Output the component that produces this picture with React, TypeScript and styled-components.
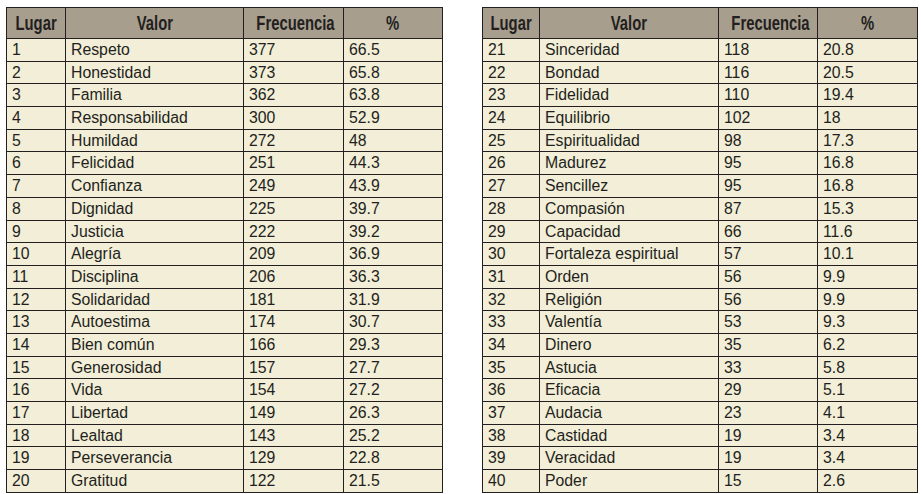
import React from "react";
import styled, { createGlobalStyle } from "styled-components";

const Global = createGlobalStyle`
  html, body { margin: 0; padding: 0; background: #ffffff; }
  body { font-family: "Liberation Sans", Arial, sans-serif; }
`;

type Row = [number, string, number, string];

const left: Row[] = [
  [1, "Respeto", 377, "66.5"],
  [2, "Honestidad", 373, "65.8"],
  [3, "Familia", 362, "63.8"],
  [4, "Responsabilidad", 300, "52.9"],
  [5, "Humildad", 272, "48"],
  [6, "Felicidad", 251, "44.3"],
  [7, "Confianza", 249, "43.9"],
  [8, "Dignidad", 225, "39.7"],
  [9, "Justicia", 222, "39.2"],
  [10, "Alegría", 209, "36.9"],
  [11, "Disciplina", 206, "36.3"],
  [12, "Solidaridad", 181, "31.9"],
  [13, "Autoestima", 174, "30.7"],
  [14, "Bien común", 166, "29.3"],
  [15, "Generosidad", 157, "27.7"],
  [16, "Vida", 154, "27.2"],
  [17, "Libertad", 149, "26.3"],
  [18, "Lealtad", 143, "25.2"],
  [19, "Perseverancia", 129, "22.8"],
  [20, "Gratitud", 122, "21.5"],
];

const right: Row[] = [
  [21, "Sinceridad", 118, "20.8"],
  [22, "Bondad", 116, "20.5"],
  [23, "Fidelidad", 110, "19.4"],
  [24, "Equilibrio", 102, "18"],
  [25, "Espiritualidad", 98, "17.3"],
  [26, "Madurez", 95, "16.8"],
  [27, "Sencillez", 95, "16.8"],
  [28, "Compasión", 87, "15.3"],
  [29, "Capacidad", 66, "11.6"],
  [30, "Fortaleza espiritual", 57, "10.1"],
  [31, "Orden", 56, "9.9"],
  [32, "Religión", 56, "9.9"],
  [33, "Valentía", 53, "9.3"],
  [34, "Dinero", 35, "6.2"],
  [35, "Astucia", 33, "5.8"],
  [36, "Eficacia", 29, "5.1"],
  [37, "Audacia", 23, "4.1"],
  [38, "Castidad", 19, "3.4"],
  [39, "Veracidad", 19, "3.4"],
  [40, "Poder", 15, "2.6"],
];

const Page = styled.div`
  display: flex;
  gap: 39px;
  padding: 7px 0 0 6px;
  align-items: flex-start;
`;

const Table = styled.table<{ $w: number }>`
  width: ${(p) => p.$w}px;
  border-collapse: collapse;
  table-layout: fixed;
  background: #f2eed7;
  border: 1.5px solid #231f20;
  color: #231f20;
`;

const HeadCell = styled.th`
  background: #a79e8e;
  border: 1px solid #231f20;
  height: 24px;
  padding: 6px 0 0 0;
  text-align: center;
  vertical-align: top;
  font-family: "Liberation Sans", Arial, sans-serif;
  font-weight: 700;
  font-size: 19.5px;
  line-height: 1;
  color: #231f20;
  overflow: hidden;
`;

const Squeeze = styled.span`
  display: inline-block;
  transform: scaleX(0.76);
  transform-origin: center;
  white-space: nowrap;
`;

const Cell = styled.td`
  border: 1px solid #231f20;
  height: 18.7px;
  padding: 3px 5px 0 5px;
  vertical-align: top;
  font-size: 15.8px;
  line-height: 1;
  white-space: nowrap;
  overflow: hidden;
`;

const widths = {
  left: [59, 178, 100, 99],
  right: [57, 179, 99, 100],
};

const DataTable: React.FC<{ rows: Row[]; cols: number[] }> = ({ rows, cols }) => (
  <Table $w={cols.reduce((a, b) => a + b, 0) + 1}>
    <colgroup>
      {cols.map((w, i) => (
        <col key={i} style={{ width: w }} />
      ))}
    </colgroup>
    <thead>
      <tr>
        <HeadCell><Squeeze>Lugar</Squeeze></HeadCell>
        <HeadCell><Squeeze>Valor</Squeeze></HeadCell>
        <HeadCell><Squeeze>Frecuencia</Squeeze></HeadCell>
        <HeadCell><Squeeze>%</Squeeze></HeadCell>
      </tr>
    </thead>
    <tbody>
      {rows.map((r) => (
        <tr key={r[0]}>
          <Cell>{r[0]}</Cell>
          <Cell>{r[1]}</Cell>
          <Cell>{r[2]}</Cell>
          <Cell>{r[3]}</Cell>
        </tr>
      ))}
    </tbody>
  </Table>
);

export default function App() {
  return (
    <>
      <Global />
      <Page>
        <DataTable rows={left} cols={widths.left} />
        <DataTable rows={right} cols={widths.right} />
      </Page>
    </>
  );
}
